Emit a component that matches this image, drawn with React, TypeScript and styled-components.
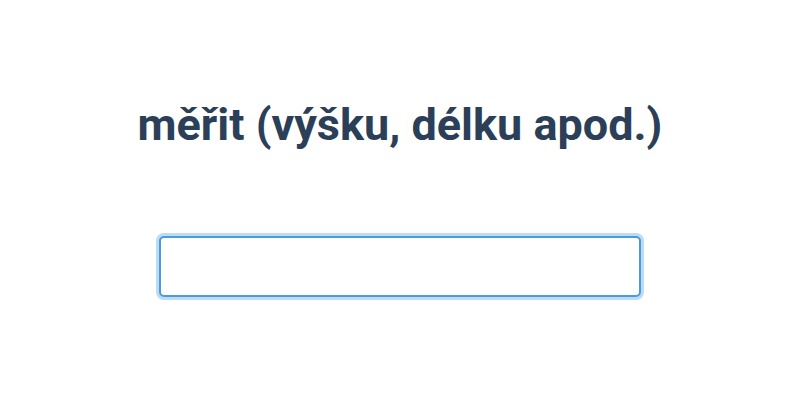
import React from 'react';
import styled, { createGlobalStyle } from 'styled-components';

const Global = createGlobalStyle`
  html, body { margin: 0; padding: 0; background: #ffffff; }
  body { font-family: Roboto, "Noto Sans", sans-serif; }
`;

const Page = styled.div`
  width: 800px;
  height: 400px;
  display: flex;
  flex-direction: column;
  align-items: center;
  box-sizing: border-box;
  padding-top: 99px;
`;

const Heading = styled.h1`
  margin: 0;
  font-family: Roboto, "Noto Sans", sans-serif;
  font-weight: 700;
  font-size: 45px;
  line-height: 52px;
  color: #2c3f58;
`;

const Answer = styled.input`
  margin-top: 85px;
  width: 482px;
  height: 61px;
  box-sizing: border-box;
  border: 2px solid #4a9be0;
  border-radius: 5px;
  box-shadow: 0 0 0 3px #bcdcf6;
  outline: none;
  font-family: Roboto, sans-serif;
  font-size: 24px;
  padding: 0 12px;
  color: #2c3f58;
`;

export default function App() {
  return (
    <>
      <Global />
      <Page>
        <Heading>měřit (výšku, délku apod.)</Heading>
        <Answer type="text" />
      </Page>
    </>
  );
}
